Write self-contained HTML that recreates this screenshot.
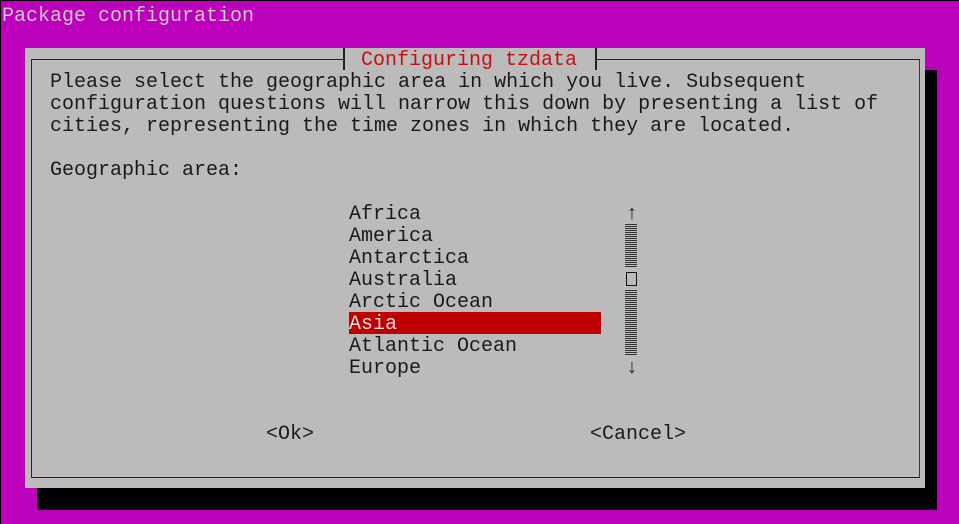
<!DOCTYPE html><html><head><style>
body{margin:0;width:959px;height:524px;background:#bc00bc;position:relative;overflow:hidden;font-family:"Liberation Mono",monospace;font-size:20px;}
.t{position:absolute;white-space:pre;line-height:22px;color:#1a1a1a}
.a{position:absolute}
</style></head><body>
<div class="a" style="left:0;top:0;width:959px;height:1px;background:#000"></div>
<div class="a" style="left:0;top:0;width:1px;height:524px;background:#000"></div>
<div class="t" style="left:2px;top:6px;color:#c8c8c8">Package configuration</div>
<div class="a" style="left:37px;top:70px;width:900px;height:440px;background:#000"></div>
<div class="a" style="left:25px;top:48px;width:900px;height:440px;background:#bbb"></div>
<div class="a" style="left:31px;top:59px;width:887px;height:417px;border:1px solid #222;border-left-color:#332211;border-right-color:#4a3020"></div>
<div class="a" style="left:343px;top:48px;width:250px;height:22px;background:#bbb;border-left:2px solid #222;border-right:2px solid #222"></div>
<div class="t" style="left:361px;top:50px;color:#c41010">Configuring tzdata</div>
<div class="t" style="left:50px;top:72px">Please select the geographic area in which you live. Subsequent
configuration questions will narrow this down by presenting a list of
cities, representing the time zones in which they are located.

Geographic area:</div>
<div class="a" style="left:349px;top:312px;width:252px;height:22px;background:#bf0000"></div>
<div class="t" style="left:349px;top:204px">Africa
America
Antarctica
Australia
Arctic Ocean
<span style="color:#ddd">Asia</span>
Atlantic Ocean
Europe</div>
<div class="t" style="left:626px;top:204px;color:#222">↑</div>
<div class="a" style="left:625px;top:224px;width:12px;height:44px;background:repeating-linear-gradient(#333 0 1px,#bbb 1px 2px)"></div>
<div class="a" style="left:626px;top:272px;width:9px;height:12px;border:1px solid #111"></div>
<div class="a" style="left:625px;top:290px;width:12px;height:66px;background:repeating-linear-gradient(#333 0 1px,#bbb 1px 2px)"></div>
<div class="t" style="left:626px;top:358px;color:#222">↓</div>
<div class="t" style="left:266px;top:424px">&lt;Ok&gt;</div>
<div class="t" style="left:590px;top:424px">&lt;Cancel&gt;</div>
</body></html>
